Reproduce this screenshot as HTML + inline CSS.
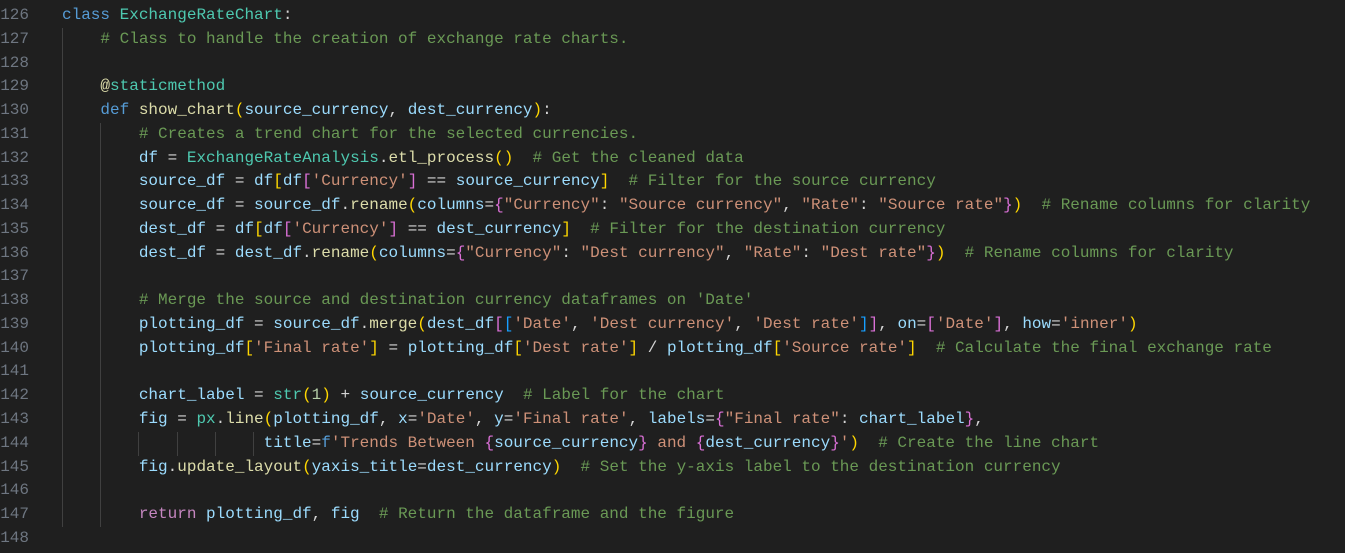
<!DOCTYPE html>
<html><head><meta charset="utf-8"><style>
html,body{margin:0;padding:0;background:#1f1f1f;width:1345px;height:553px;overflow:hidden}
.wrap{position:relative;width:1345px;height:553px;font-family:"Liberation Mono",monospace;font-size:16px;}
.ln{position:absolute;left:0;top:4px;width:29px;text-align:right;color:#6e7681;line-height:23.77px;white-space:pre}
.code{position:absolute;left:62px;top:4px;color:#9cdcfe;line-height:23.77px;white-space:pre}
.g{position:absolute;width:1px;background:#404040}
.k{color:#569cd6}.r{color:#c586c0}.c{color:#4ec9b0}.f{color:#dcdcaa}.s{color:#ce9178}.m{color:#6a9955}.n{color:#b5cea8}.w{color:#d4d4d4}
.b1{color:#ffd700}.b2{color:#da70d6}.b3{color:#179fff}
</style></head><body><div class="wrap">
<div class="g" style="left:62px;top:28px;height:499px"></div>
<div class="g" style="left:100px;top:123px;height:404px"></div>
<div class="g" style="left:138px;top:432px;height:24px"></div>
<div class="g" style="left:177px;top:432px;height:24px"></div>
<div class="g" style="left:215px;top:432px;height:24px"></div>
<div class="g" style="left:253px;top:432px;height:24px"></div>
<div class="ln">126
127
128
129
130
131
132
133
134
135
136
137
138
139
140
141
142
143
144
145
146
147
148</div>
<div class="code"><span class="k">class</span> <span class="c">ExchangeRateChart</span><span class="w">:</span>
    <span class="m"># Class to handle the creation of exchange rate charts.</span>

    <span class="f">@</span><span class="c">staticmethod</span>
    <span class="k">def</span> <span class="f">show_chart</span><span class="b1">(</span>source_currency<span class="w">,</span> dest_currency<span class="b1">)</span><span class="w">:</span>
        <span class="m"># Creates a trend chart for the selected currencies.</span>
        df <span class="w">=</span> <span class="c">ExchangeRateAnalysis</span><span class="w">.</span><span class="f">etl_process</span><span class="b1">()</span>  <span class="m"># Get the cleaned data</span>
        source_df <span class="w">=</span> df<span class="b1">[</span>df<span class="b2">[</span><span class="s">'Currency'</span><span class="b2">]</span> <span class="w">==</span> source_currency<span class="b1">]</span>  <span class="m"># Filter for the source currency</span>
        source_df <span class="w">=</span> source_df<span class="w">.</span><span class="f">rename</span><span class="b1">(</span>columns<span class="w">=</span><span class="b2">{</span><span class="s">"Currency"</span><span class="w">:</span> <span class="s">"Source currency"</span><span class="w">,</span> <span class="s">"Rate"</span><span class="w">:</span> <span class="s">"Source rate"</span><span class="b2">}</span><span class="b1">)</span>  <span class="m"># Rename columns for clarity</span>
        dest_df <span class="w">=</span> df<span class="b1">[</span>df<span class="b2">[</span><span class="s">'Currency'</span><span class="b2">]</span> <span class="w">==</span> dest_currency<span class="b1">]</span>  <span class="m"># Filter for the destination currency</span>
        dest_df <span class="w">=</span> dest_df<span class="w">.</span><span class="f">rename</span><span class="b1">(</span>columns<span class="w">=</span><span class="b2">{</span><span class="s">"Currency"</span><span class="w">:</span> <span class="s">"Dest currency"</span><span class="w">,</span> <span class="s">"Rate"</span><span class="w">:</span> <span class="s">"Dest rate"</span><span class="b2">}</span><span class="b1">)</span>  <span class="m"># Rename columns for clarity</span>

        <span class="m"># Merge the source and destination currency dataframes on 'Date'</span>
        plotting_df <span class="w">=</span> source_df<span class="w">.</span><span class="f">merge</span><span class="b1">(</span>dest_df<span class="b2">[</span><span class="b3">[</span><span class="s">'Date'</span><span class="w">,</span> <span class="s">'Dest currency'</span><span class="w">,</span> <span class="s">'Dest rate'</span><span class="b3">]</span><span class="b2">]</span><span class="w">,</span> on<span class="w">=</span><span class="b2">[</span><span class="s">'Date'</span><span class="b2">]</span><span class="w">,</span> how<span class="w">=</span><span class="s">'inner'</span><span class="b1">)</span>
        plotting_df<span class="b1">[</span><span class="s">'Final rate'</span><span class="b1">]</span> <span class="w">=</span> plotting_df<span class="b1">[</span><span class="s">'Dest rate'</span><span class="b1">]</span> <span class="w">/</span> plotting_df<span class="b1">[</span><span class="s">'Source rate'</span><span class="b1">]</span>  <span class="m"># Calculate the final exchange rate</span>

        chart_label <span class="w">=</span> <span class="c">str</span><span class="b1">(</span><span class="n">1</span><span class="b1">)</span> <span class="w">+</span> source_currency  <span class="m"># Label for the chart</span>
        fig <span class="w">=</span> <span class="c">px</span><span class="w">.</span><span class="f">line</span><span class="b1">(</span>plotting_df<span class="w">,</span> x<span class="w">=</span><span class="s">'Date'</span><span class="w">,</span> y<span class="w">=</span><span class="s">'Final rate'</span><span class="w">,</span> labels<span class="w">=</span><span class="b2">{</span><span class="s">"Final rate"</span><span class="w">:</span> chart_label<span class="b2">}</span><span class="w">,</span>
                     title<span class="w">=</span><span class="k">f</span><span class="s">'Trends Between </span><span class="b2">{</span>source_currency<span class="b2">}</span><span class="s"> and </span><span class="b2">{</span>dest_currency<span class="b2">}</span><span class="s">'</span><span class="b1">)</span>  <span class="m"># Create the line chart</span>
        fig<span class="w">.</span><span class="f">update_layout</span><span class="b1">(</span>yaxis_title<span class="w">=</span>dest_currency<span class="b1">)</span>  <span class="m"># Set the y-axis label to the destination currency</span>

        <span class="r">return</span> plotting_df<span class="w">,</span> fig  <span class="m"># Return the dataframe and the figure</span>
</div>
</div></body></html>
